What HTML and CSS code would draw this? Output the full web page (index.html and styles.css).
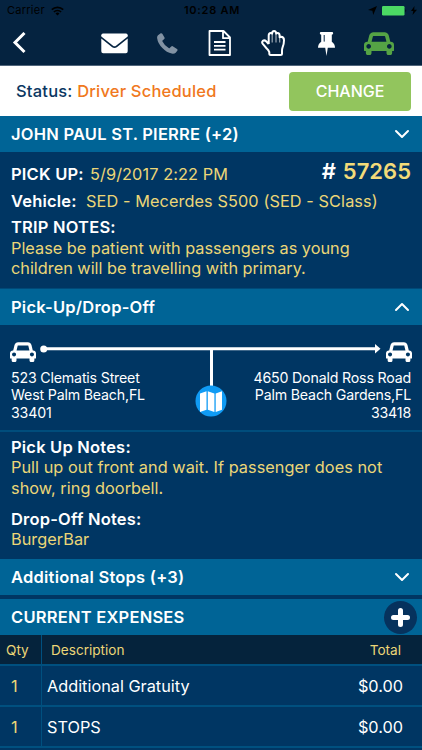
FILE: index.html
```html
<!DOCTYPE html>
<html lang="en">
<head>
  <meta charset="UTF-8" />
  <meta name="viewport" content="width=device-width, initial-scale=1.0"/>
  <title>Trip Details</title>
  <link rel="stylesheet" href="styles.css">
</head>
<body>
  <!-- shared icons -->
  <svg class="icon-defs" width="0" height="0">
    <symbol id="car" viewBox="0 128 2048 1536">
      <path d="M480 1088q0-66-47-113t-113-47-113 47-47 113 47 113 113 47 113-47 47-113zm36-320h1016l-89-357q-2-8-14-17.5t-21-9.5h-768q-9 0-21 9.5t-14 17.5zm1372 320q0-66-47-113t-113-47-113 47-47 113 47 113 113 47 113-47 47-113zm160-96v384q0 14-9 23t-23 9h-96v128q0 80-56 136t-136 56-136-56-56-136v-128h-1024v128q0 80-56 136t-136 56-136-56-56-136v-128h-96q-14 0-23-9t-9-23v-384q0-93 65.5-158.5t158.5-65.5h28l105-419q23-94 104-157.5t179-63.5h768q98 0 179 63.5t104 157.5l105 419h28q93 0 158.5 65.5t65.5 158.5z" fill="currentColor"/>
    </symbol>
    <symbol id="chevron" viewBox="0 0 16 10">
      <path d="M2 2l6 6 6-6" fill="none" stroke="currentColor" stroke-width="2" stroke-linecap="round" stroke-linejoin="round"/>
    </symbol>
  </svg>

  <header class="app-header">
    <div class="phone-bar">
      <div class="carrier">
        <span>Carrier</span>
        <svg width="13" height="10" viewBox="0 0 13 10" fill="none" stroke="#000" stroke-width="1.7">
          <path d="M.8 3.7a8.2 8.2 0 0 1 11.4 0M2.9 6a5.1 5.1 0 0 1 7.2 0"/>
          <path d="M6.5 9.5L4.5 7.5a2.8 2.8 0 0 1 4 0z" fill="#000" stroke="none"/>
        </svg>
      </div>
      <span class="clock">10:28 AM</span>
      <div class="power">
        <svg width="9" height="9" viewBox="0 0 9 9"><path d="M9 0L5.2 9 4.4 4.7 0 4z"/></svg>
        <svg width="25" height="10" viewBox="0 0 25 10"><rect width="22.500" height="9.500" rx="1.200" fill="#4cd964"/><path d="M23.500 3q1.500 1.700 0 3.500z"/></svg>
        <svg width="6" height="9" viewBox="0 0 6 9"><path d="M3.500 0L0 5h2.300L1.500 9 6 3.700H3.200z"/></svg>
      </div>
    </div>
    <nav class="toolbar">
      <svg class="back" width="14" height="22" viewBox="0 0 14 22"><path d="M12.500 1L3 10.500l9.500 9.500" fill="none" stroke="#fff" stroke-width="3"/></svg>
      <svg class="mail" width="27" height="21" viewBox="0 0 27 21">
        <path d="M2 .5h23q1.700 0 1.700 1.700v1.300L15 12.700q-1.500 1.100-3 0L.3 3.500V2.200Q.3.500 2 .5z" fill="#fff"/>
        <path d="M.3 5.600l10.900 8.600q2.300 1.500 4.600 0l10.900-8.600v12.700q0 1.900-1.900 1.900H2.200q-1.900 0-1.900-1.900z" fill="#fff"/>
      </svg>
      <svg class="phone" width="21" height="21" viewBox="0 0 21 21"><path d="M1 2.200L3.700.3q1-.5 1.600.5L7.500 4.600q.4 1-.5 1.700L5.500 7.500q-.3.400 0 1.100 2 4.200 6.200 6.500.6.300 1-.1l1.500-1.400q.9-.9 1.900-.2l3.900 2.600q1 .8.300 1.700l-1.600 2q-1.300 1.300-4 .9-5-1-9.300-5.500Q.8 10.300.2 5.500-.2 3.400 1 2.200z" fill="#8292a3"/></svg>
      <svg class="doc" width="23" height="26" viewBox="0 0 23 26" fill="none" stroke="#fff" stroke-width="1.800">
        <path d="M1.500 1h14L22 7.500V25H1.500zM15 1v7.200h7M6 12h11.500M6 15.800h11.500M6 19.600h11.500" stroke-linejoin="round"/>
      </svg>
      <svg class="hand" width="25" height="26" viewBox="0 0 25 26" fill="none" stroke="#fff">
        <path d="M7.700 14V5.500q0-2.500 2-2.500.8 0 1.400.6Q11.100 1 13.100 1t2.100 2.600Q15.700 3 16.600 3q2 0 2 2.500v1.800q.5-.5 1.400-.5 3 .2 3 3.400 0 4-1.500 7.500-.5 1.300-.5 3.300v2.500q0 1.500-1.500 1.500H9.800q-1.500 0-1.500-1.500v-1.300Q7.500 20 5.700 18.500L2 14.200q-1.600-2-.2-3.300 1.700-1.200 3.300.4l2.600 2.700" stroke-width="2" stroke-linejoin="round"/>
        <path d="M11.200 4v8.500M15 4v8.500M18.700 7v5.500" stroke-width="1.200" opacity=".6"/>
      </svg>
      <svg class="pin" width="17" height="24" viewBox="0 0 17 24" fill="#fff">
        <path d="M3 0h11q1.200 0 1.200 1.300T13.800 2.700v7.100Q17 12 17 15.700H9.800L8.500 24 7.200 15.700H0Q0 12 3.200 9.800V2.700Q1.800 2.600 1.800 1.300T3 0z"/>
        <path d="M6.200 3v6.600" stroke="#052340" stroke-width="1"/>
      </svg>
      <svg class="car-active" width="30" height="23"><use href="#car"/></svg>
    </nav>
  </header>

  <div class="status-row">
    <p class="status"><span class="status-label">Status:</span> <span class="status-value">Driver Scheduled</span></p>
    <button type="button" class="change-btn">CHANGE</button>
  </div>

  <main>
    <div class="section-bar">
      <h2>JOHN PAUL ST. PIERRE (+2)</h2>
      <svg class="chevron" width="16" height="10"><use href="#chevron"/></svg>
    </div>
    <section class="trip">
      <div class="trip-line">
        <b class="pickup-label">PICK UP:</b>
        <span class="pickup-date">5/9/2017 2:22 PM</span>
        <span class="trip-id"><span>#</span> <em>57265</em></span>
      </div>
      <div class="trip-line">
        <b class="vehicle-label">Vehicle:</b>
        <span class="vehicle">SED - Mecerdes S500 (SED - SClass)</span>
      </div>
      <b class="notes-title">TRIP NOTES:</b>
      <p class="note">Please be patient with passengers as young<br>children will be travelling with primary.</p>
    </section>

    <div class="section-bar">
      <h2>Pick-Up/Drop-Off</h2>
      <svg class="chevron up" width="16" height="10"><use href="#chevron"/></svg>
    </div>
    <section class="route">
      <div class="route-track">
        <svg class="car" width="26" height="20"><use href="#car"/></svg>
        <svg class="track" width="342" height="60" viewBox="0 0 342 60">
          <circle cx="3.700" cy="8" r="3.500" fill="#fff"/>
          <path d="M4 7.700h331M171.500 8v38" stroke="#fff" stroke-width="3"/>
          <path d="M335 3l5.500 4.800-5.500 4.800z" fill="#fff"/>
        </svg>
        <svg class="car" width="26" height="20"><use href="#car"/></svg>
      </div>
      <div class="addresses">
        <p>523 Clematis Street<br>West Palm Beach,FL<br>33401</p>
        <svg class="map" width="32" height="32" viewBox="0 0 32 32">
          <circle cx="16" cy="16" r="15.500" fill="#109bf4"/>
          <path d="M5 8.500l6.500-2.300v18.500L5 27zM12.800 6.200l6.600 2.300V27l-6.600-2.300zM20.700 8.500l6.300-2.300v18.500L20.700 27z" fill="#fff"/>
        </svg>
        <p class="dropoff">4650 Donald Ross Road<br>Palm Beach Gardens,FL<br>33418</p>
      </div>
    </section>
    <section class="stop-notes">
      <b>Pick Up Notes:</b>
      <p class="note">Pull up out front and wait. If passenger does not<br>show, ring doorbell.</p>
      <b class="dropoff-title">Drop-Off Notes:</b>
      <p class="note">BurgerBar</p>
    </section>

    <div class="section-bar stops">
      <h2>Additional Stops (+3)</h2>
      <svg class="chevron" width="16" height="10"><use href="#chevron"/></svg>
    </div>

    <div class="section-bar expenses">
      <h2>CURRENT EXPENSES</h2>
      <button type="button" class="add-btn" aria-label="Add expense">
        <svg width="19" height="19" viewBox="0 0 19 19"><path d="M9.500 2.500v14M2.500 9.500h14" stroke="#fff" stroke-width="5" stroke-linecap="round"/></svg>
      </button>
    </div>
    <div class="expense-table">
      <div class="row head"><span class="qty">Qty</span><span class="desc">Description</span><span class="total">Total</span></div>
      <div class="row"><span class="qty">1</span><span class="desc">Additional Gratuity</span><span class="total">$0.00</span></div>
      <div class="row"><span class="qty">1</span><span class="desc">STOPS</span><span class="total">$0.00</span></div>
    </div>
  </main>
</body>
</html>
```

FILE: styles.css
```css
* {
  box-sizing: border-box;
}

body {
  margin: 0;
  width: 422px;
  height: 750px;
  overflow: hidden;
  font-family: Inter, "Liberation Sans", sans-serif;
  font-size: 16.3px;
  line-height: 20.5px;
  color: #fff;
  background: #003663;
}

p,
h2 {
  margin: 0;
}

b {
  font-size: 16.5px;
  font-weight: 600;
  letter-spacing: 0.2px;
}

svg {
  display: block;
  flex: none;
}

.icon-defs {
  position: absolute;
}

/* header */
.app-header {
  height: 66px;
  background: #052340;
  border-bottom: 1px solid #50657b;
}

.phone-bar {
  height: 21px;
  padding: 0 5px 0 7px;
  display: grid;
  grid-template-columns: 1fr auto 1fr;
  align-items: center;
  font-size: 11px;
  line-height: 21px;
  color: #000;
}

.carrier,
.power {
  display: flex;
  align-items: center;
}

.carrier {
  gap: 6px;
  letter-spacing: 0.25px;
}

.clock {
  font-weight: 600;
  letter-spacing: 0.75px;
}

.power {
  justify-content: flex-end;
  gap: 5px;
}

.power svg:last-child {
  margin-left: -1px;
}

.toolbar {
  height: 44px;
  padding-left: 12px;
  display: flex;
  align-items: center;
}

.mail {
  margin-left: 75px;
}

.phone {
  margin-left: 29px;
}

.doc {
  margin-left: 30px;
}

.hand {
  margin-left: 30px;
}

.pin {
  margin-left: 32px;
  margin-top: 1px;
}

.car-active {
  margin-left: 29px;
  color: #55a345;
}

/* status */
.status-row {
  height: 50px;
  padding: 0 11px 0 16px;
  display: flex;
  align-items: center;
  justify-content: space-between;
  background: #fff;
}

.status {
  font-size: 16.5px;
  font-weight: 500;
  letter-spacing: 0.2px;
}

.status-label {
  color: #0b3762;
}

.status-value {
  color: #f07820;
}

.change-btn {
  width: 122px;
  height: 39px;
  border: none;
  border-radius: 4px;
  background: #92c55d;
  color: #fff;
  font: 500 16px/39px Inter, sans-serif;
  padding: 0;
}

/* section bars */
.section-bar {
  height: 36px;
  padding: 0 12px 0 11px;
  display: flex;
  align-items: center;
  justify-content: space-between;
  background: #006496;
}

.section-bar h2 {
  font-size: 16.5px;
  font-weight: 600;
  letter-spacing: 0.23px;
}

.up {
  transform: rotate(180deg);
}

/* trip info */
.trip {
  height: 137px;
  padding: 9px 11px 0;
  border-bottom: 1px solid #004a79;
}

.trip-line {
  height: 27px;
  line-height: 27px;
  display: flex;
}

.trip b,
.stop-notes b {
  display: block;
}

.pickup-label {
  width: 79px;
}

.vehicle-label {
  width: 75px;
}

.pickup-date,
.vehicle {
  letter-spacing: 0.09px;
}

.pickup-date,
.vehicle,
.note {
  color: #ecd677;
}

.notes-title {
  margin-top: 2px;
}

.trip-id {
  margin-left: auto;
  margin-top: -3px;
  font-size: 22px;
  font-weight: 600;
  display: flex;
  gap: 7px;
}

.trip-id em {
  font-style: normal;
  color: #f2db79;
}

/* route */
.route {
  height: 107px;
  padding: 16px 11px 0 10px;
  border-bottom: 2px solid #004d7c;
  font-size: 14.2px;
  line-height: 17.3px;
  letter-spacing: -0.18px;
}

.route-track {
  height: 28px;
  display: flex;
  gap: 4px;
}

.route .car {
  margin-top: 0.5px;
}

.addresses {
  display: flex;
  justify-content: space-between;
  padding-left: 1px;
}

/* sits over the end of the track line */
.map {
  position: absolute;
  left: 195px;
  top: 385px;
}

.dropoff {
  text-align: right;
}

/* notes */
.stop-notes {
  height: 127px;
  padding: 5px 11px 0;
}

.stop-notes .note {
  margin-top: -0.5px;
  letter-spacing: 0.04px;
}

.dropoff-title {
  margin-top: 11px;
}

.expenses {
  margin-top: 4px;
  padding-right: 5px;
}

.add-btn {
  width: 33px;
  height: 33px;
  border: none;
  border-radius: 50%;
  padding: 0;
  background: #06325d;
  display: flex;
  align-items: center;
  justify-content: center;
}

/* expenses */
.row {
  height: 41px;
  display: flex;
  align-items: center;
  border-bottom: 2px solid #00507f;
}

.row span {
  padding-top: 1px;
}

.row .qty {
  width: 42px;
  height: 100%;
  padding-left: 11px;
  display: flex;
  align-items: center;
  border-right: 1px solid #00507f;
  color: #ecd677;
}

.desc {
  padding-left: 5px;
}

.total {
  margin-left: auto;
  padding-right: 19px;
}

.head {
  height: 31px;
  background: #05233c;
  color: #ecd677;
  font-size: 13.6px;
}

.head .qty {
  padding-left: 6px;
}

.head .desc {
  padding-left: 9px;
}

.head .total {
  padding-right: 21px;
}
```
